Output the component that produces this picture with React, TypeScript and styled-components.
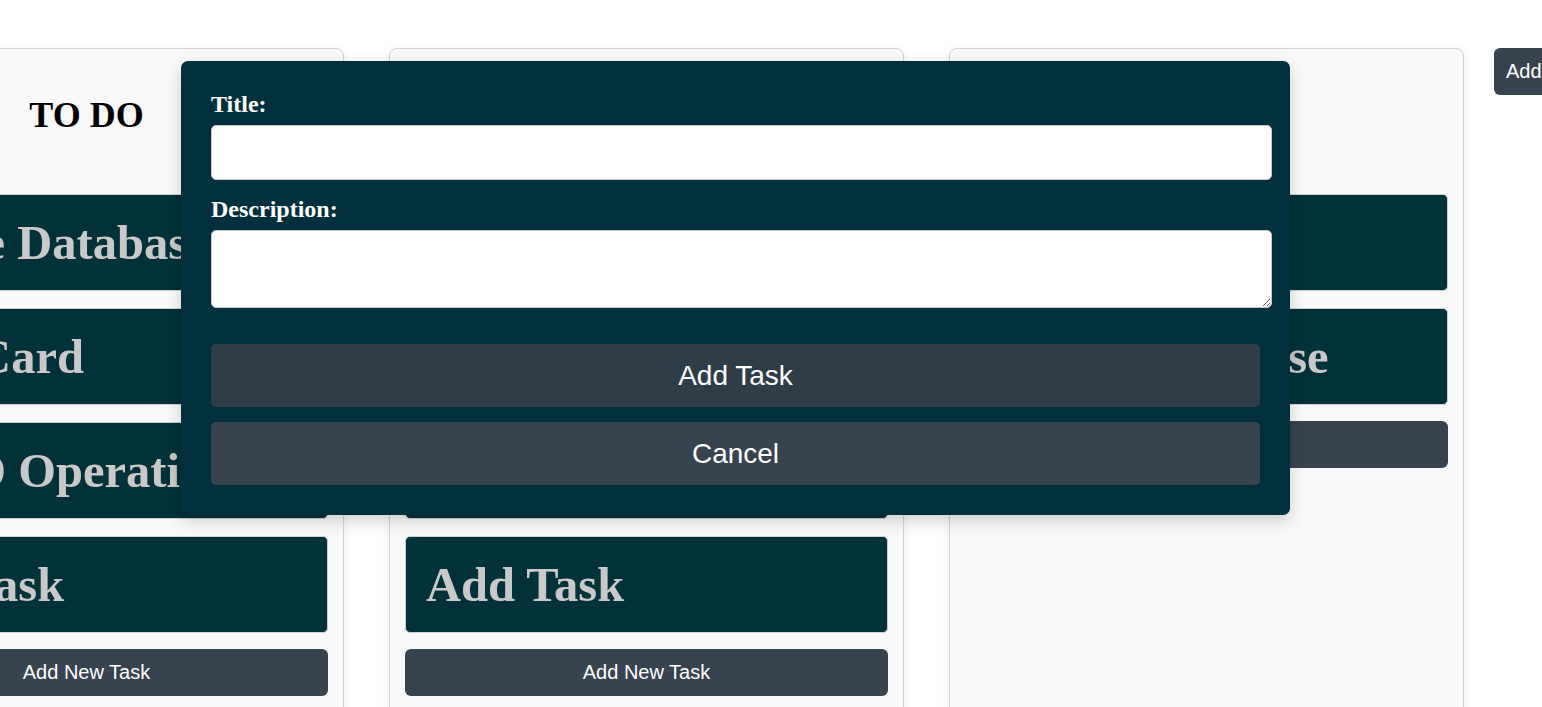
import React from "react";
import styled, { createGlobalStyle } from "styled-components";

const Global = createGlobalStyle`
  html, body {
    margin: 0;
    padding: 0;
    overflow: hidden;
    background: #ffffff;
    font-family: "Liberation Serif", "Times New Roman", serif;
  }
`;

const Page = styled.div`
  position: relative;
  width: 1542px;
  height: 707px;
  overflow: hidden;
`;

const Board = styled.div`
  display: flex;
  align-items: flex-start;
  gap: 30px;
  padding-top: 48px;
  margin-left: -171px;
`;

const Columns = styled.div`
  display: flex;
  align-items: stretch;
  gap: 45px;
`;

const Column = styled.section`
  flex: 0 0 515px;
  box-sizing: border-box;
  min-height: 700px;
  display: flex;
  flex-direction: column;
  gap: 17px;
  padding: 16px 15px;
  background: #f9f9f9;
  border: 1px solid #d2d2d2;
  border-radius: 8px;
  box-shadow: 0 2px 10px rgba(0, 0, 0, 0.07);
`;

const ColumnTitle = styled.h2`
  box-sizing: border-box;
  height: 112px;
  margin: 0;
  padding-bottom: 13px;
  display: flex;
  align-items: center;
  justify-content: center;
  font-family: "Liberation Serif", "Times New Roman", serif;
  font-weight: 700;
  font-size: 36px;
  color: #000;
`;

const Card = styled.div`
  box-sizing: border-box;
  height: 97px;
  display: flex;
  align-items: center;
  padding: 0 20px;
  background: #013139;
  border: 1px solid #cfcfcf;
  border-radius: 5px;
  white-space: nowrap;
  overflow: hidden;
  font-family: "Liberation Serif", "Times New Roman", serif;
  font-weight: 700;
  font-size: 48.5px;
  color: #c9c9c9;
`;

const DarkButton = styled.button`
  box-sizing: border-box;
  height: 47px;
  border: none;
  border-radius: 6px;
  background: #37434f;
  color: #ffffff;
  font-family: "Liberation Sans", Arial, sans-serif;
  font-size: 20px;
  cursor: pointer;
`;

const AddTaskButton = styled(DarkButton)`
  margin-top: -1px;
`;

const AddColumnButton = styled(DarkButton)`
  flex: 0 0 auto;
  height: 47px;
  padding: 0 12px;
  white-space: nowrap;
`;

const Modal = styled.div`
  position: absolute;
  left: 181px;
  top: 61px;
  width: 1109px;
  box-sizing: border-box;
  padding: 30px;
  background: #00303d;
  border-radius: 7px;
  box-shadow: 0 6px 16px rgba(0, 0, 0, 0.18);
  display: flex;
  flex-direction: column;
`;

const Label = styled.label`
  display: block;
  margin-bottom: 7px;
  font-family: "Liberation Serif", "Times New Roman", serif;
  font-weight: 700;
  font-size: 24px;
  line-height: 26px;
  color: #ffffff;
`;

const TextInput = styled.input`
  box-sizing: border-box;
  width: calc(100% + 12px);
  height: 55px;
  margin: 1px 0 16px;
  padding: 0 8px;
  border: 1px solid #c8c8c8;
  border-radius: 5px;
  background: #ffffff;
  font-size: 18px;
`;

const TextArea = styled.textarea`
  box-sizing: border-box;
  width: calc(100% + 12px);
  height: 78px;
  margin: 1px 0 36px;
  padding: 8px;
  border: 1px solid #c8c8c8;
  border-radius: 5px;
  background: #ffffff;
  font-size: 18px;
  display: block;
`;

const ModalButton = styled.button<{ $tone: "primary" | "secondary" }>`
  box-sizing: border-box;
  width: 100%;
  height: 63px;
  border: none;
  border-radius: 5px;
  background: ${(p) => (p.$tone === "primary" ? "#2e3d48" : "#37444f")};
  color: #ffffff;
  font-family: "Liberation Sans", Arial, sans-serif;
  font-size: 28px;
  cursor: pointer;
  & + & {
    margin-top: 15px;
  }
`;

const columns = [
  {
    title: "TO DO",
    tasks: ["Create Database", "Task Card", "CRUD Operations", "Add Task"],
  },
  {
    title: "IN PROGRESS",
    tasks: ["Create Database", "Task Card", "CRUD Operations", "Add Task"],
  },
  {
    title: "DONE",
    tasks: ["Task Card", "Create Database"],
  },
];

export default function App() {
  return (
    <>
      <Global />
      <Page>
        <Board>
          <Columns>
            {columns.map((col) => (
              <Column key={col.title}>
                <ColumnTitle>{col.title}</ColumnTitle>
                {col.tasks.map((t, i) => (
                  <Card key={i}>{t}</Card>
                ))}
                <AddTaskButton>Add New Task</AddTaskButton>
              </Column>
            ))}
          </Columns>
          <AddColumnButton>Add Column</AddColumnButton>
        </Board>
        <Modal>
          <Label htmlFor="title">Title:</Label>
          <TextInput id="title" type="text" />
          <Label htmlFor="desc">Description:</Label>
          <TextArea id="desc" />
          <ModalButton $tone="primary">Add Task</ModalButton>
          <ModalButton $tone="secondary">Cancel</ModalButton>
        </Modal>
      </Page>
    </>
  );
}
